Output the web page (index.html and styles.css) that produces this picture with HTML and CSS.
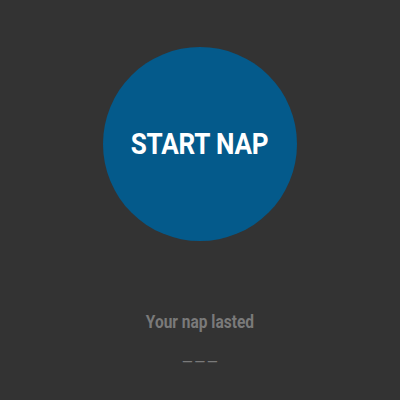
FILE: index.html
```html
<!DOCTYPE html>
<html>
<head>
<meta charset="utf-8">
<link rel="stylesheet" href="styles.css">
</head>
<body>
<main class="screen">
  <button class="nap-button"><span class="nap-text">START NAP</span></button>
  <p class="label">Your nap lasted</p>
  <p class="duration">–––</p>
</main>
</body>
</html>
```
FILE: styles.css
```css
html, body {
  margin: 0;
  padding: 0;
  background: #333333;
  width: 400px;
  height: 400px;
  overflow: hidden;
}
.screen {
  display: flex;
  flex-direction: column;
  align-items: center;
  padding-top: 47px;
  font-family: Roboto, "Liberation Sans", sans-serif;
}
.nap-button {
  width: 194px;
  height: 194px;
  border-radius: 50%;
  border: none;
  background: #045a8b;
  color: #ffffff;
  font-family: Roboto, "Liberation Sans", sans-serif;
  font-weight: 700;
  font-size: 29px;
  padding: 0;
}
.nap-text {
  display: inline-block;
  transform: scaleX(0.9);
  letter-spacing: -0.2px;
}
.label {
  margin: 70px 0 0 0;
  color: #7a7a7a;
  font-weight: 700;
  font-size: 18px;
  line-height: 22px;
  transform: scaleX(0.86);
}
.duration {
  margin: 18px 0 0 0;
  color: #7a7a7a;
  font-weight: 400;
  font-size: 19px;
  line-height: 22px;
  letter-spacing: 0;
}
```
